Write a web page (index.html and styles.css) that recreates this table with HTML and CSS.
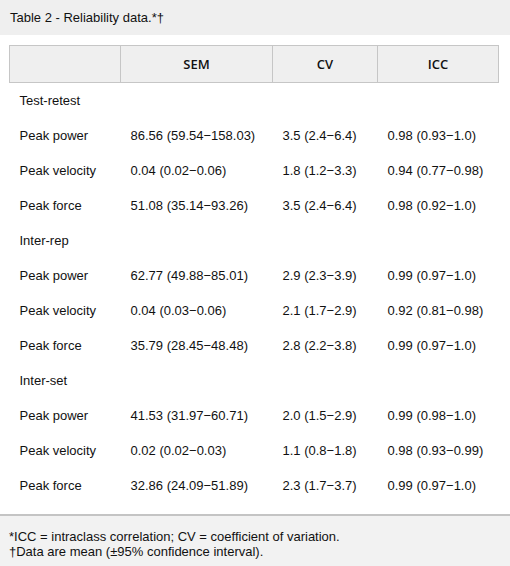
FILE: index.html
```html
<!DOCTYPE html>
<html lang="en">
<head>
  <meta charset="UTF-8">
  <title>Table 2 - Reliability data</title>
  <link rel="stylesheet" href="styles.css">
</head>
<body>
  <div class="caption">Table 2 - Reliability data.*†</div>

  <div class="table-wrap">
    <table class="data-table">
      <thead>
        <tr>
          <th class="col-label"></th>
          <th class="col-sem">SEM</th>
          <th class="col-cv">CV</th>
          <th class="col-icc">ICC</th>
        </tr>
      </thead>
      <tbody>
        <tr><td>Test-retest</td><td></td><td></td><td></td></tr>
        <tr><td>Peak power</td><td>86.56 (59.54−158.03)</td><td>3.5 (2.4−6.4)</td><td>0.98 (0.93−1.0)</td></tr>
        <tr><td>Peak velocity</td><td>0.04 (0.02−0.06)</td><td>1.8 (1.2−3.3)</td><td>0.94 (0.77−0.98)</td></tr>
        <tr><td>Peak force</td><td>51.08 (35.14−93.26)</td><td>3.5 (2.4−6.4)</td><td>0.98 (0.92−1.0)</td></tr>
        <tr><td>Inter-rep</td><td></td><td></td><td></td></tr>
        <tr><td>Peak power</td><td>62.77 (49.88−85.01)</td><td>2.9 (2.3−3.9)</td><td>0.99 (0.97−1.0)</td></tr>
        <tr><td>Peak velocity</td><td>0.04 (0.03−0.06)</td><td>2.1 (1.7−2.9)</td><td>0.92 (0.81−0.98)</td></tr>
        <tr><td>Peak force</td><td>35.79 (28.45−48.48)</td><td>2.8 (2.2−3.8)</td><td>0.99 (0.97−1.0)</td></tr>
        <tr><td>Inter-set</td><td></td><td></td><td></td></tr>
        <tr><td>Peak power</td><td>41.53 (31.97−60.71)</td><td>2.0 (1.5−2.9)</td><td>0.99 (0.98−1.0)</td></tr>
        <tr><td>Peak velocity</td><td>0.02 (0.02−0.03)</td><td>1.1 (0.8−1.8)</td><td>0.98 (0.93−0.99)</td></tr>
        <tr><td>Peak force</td><td>32.86 (24.09−51.89)</td><td>2.3 (1.7−3.7)</td><td>0.99 (0.97−1.0)</td></tr>
      </tbody>
    </table>
  </div>

  <div class="footnotes">
    <div>*ICC = intraclass correlation; CV = coefficient of variation.</div>
    <div>†Data are mean (±95% confidence interval).</div>
  </div>
</body>
</html>
```

FILE: styles.css
```css
body {
  margin: 0;
  width: 510px;
  height: 566px;
  font-family: 'Liberation Sans', Arial, sans-serif;
  font-size: 13px;
  color: #111;
  background: #fff;
  display: flex;
  flex-direction: column;
}

.caption {
  background: #efefef;
  height: 35px;
  line-height: 35px;
  padding-left: 10px;
}

.table-wrap {
  padding: 10px 9px 0 9px;
  flex: 1;
}

.data-table {
  border-collapse: collapse;
  width: 490px;
  table-layout: fixed;
}

.data-table th {
  background: #efefef;
  border: 1px solid #c6c6c6;
  height: 36px;
  padding: 0;
  font-family: 'Open Sans', 'Noto Sans', sans-serif;
  font-weight: 600;
  font-size: 13px;
  text-align: center;
}

.col-label { width: 110px; }
.col-sem { width: 151px; }
.col-cv { width: 104px; }

.data-table td {
  height: 35px;
  padding: 0 0 0 10px;
  vertical-align: middle;
  white-space: nowrap;
}

.footnotes {
  border-top: 2px solid #c4c4c4;
  background: #f2f2f2;
  height: 52px;
  padding: 13px 0 0 9px;
  box-sizing: border-box;
  line-height: 15px;
}
```
